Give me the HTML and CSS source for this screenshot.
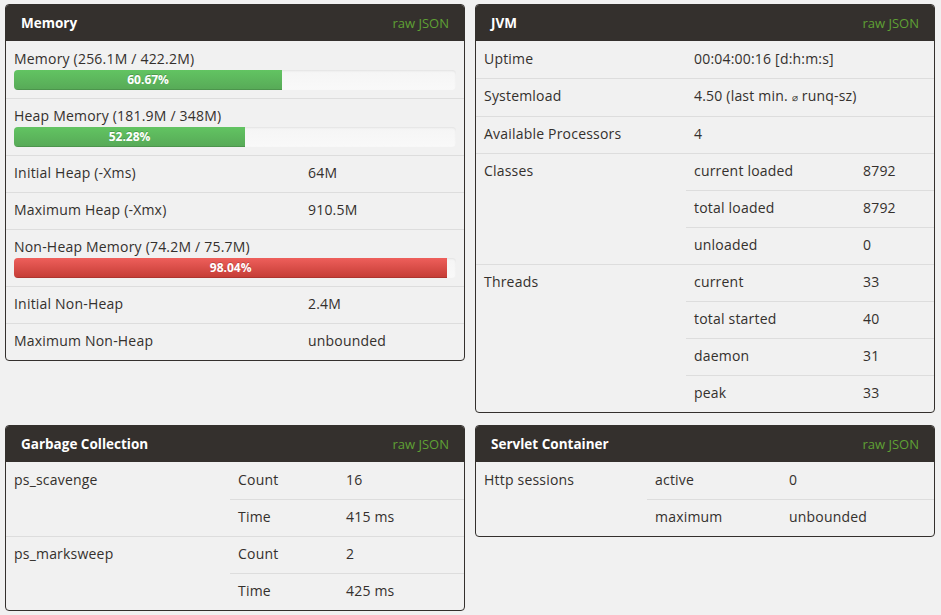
FILE: index.html
```html
<!DOCTYPE html>
<html>
<head>
<meta charset="utf-8">
<link rel="stylesheet" href="styles.css">
</head>
<body>
<div class="dashboard">
  <section class="panel">
    <header class="panel-head"><h2>Memory</h2><a class="raw" href="#">raw JSON</a></header>
    <table class="data">
      <colgroup><col class="w294"><col></colgroup>
      <tbody>
        <tr><td colspan="2">Memory (256.1M / 422.2M)<div class="progress"><div class="bar ok" style="width:60.67%">60.67%</div></div></td></tr>
        <tr><td colspan="2">Heap Memory (181.9M / 348M)<div class="progress"><div class="bar ok" style="width:52.28%">52.28%</div></div></td></tr>
        <tr><td>Initial Heap (-Xms)</td><td>64M</td></tr>
        <tr><td>Maximum Heap (-Xmx)</td><td>910.5M</td></tr>
        <tr><td colspan="2">Non-Heap Memory (74.2M / 75.7M)<div class="progress"><div class="bar danger" style="width:98.04%">98.04%</div></div></td></tr>
        <tr><td>Initial Non-Heap</td><td>2.4M</td></tr>
        <tr><td>Maximum Non-Heap</td><td>unbounded</td></tr>
      </tbody>
    </table>
  </section>

  <section class="panel">
    <header class="panel-head"><h2>JVM</h2><a class="raw" href="#">raw JSON</a></header>
    <table class="data">
      <colgroup><col class="w210"><col class="w169"><col></colgroup>
      <tbody>
        <tr><td>Uptime</td><td colspan="2">00:04:00:16 [d:h:m:s]</td></tr>
        <tr><td>Systemload</td><td colspan="2">4.50 (last min. <span class="avg">⌀</span> runq-sz)</td></tr>
        <tr><td>Available Processors</td><td colspan="2">4</td></tr>
        <tr><td rowspan="3">Classes</td><td>current loaded</td><td>8792</td></tr>
        <tr><td>total loaded</td><td>8792</td></tr>
        <tr><td>unloaded</td><td>0</td></tr>
        <tr><td rowspan="4">Threads</td><td>current</td><td>33</td></tr>
        <tr><td>total started</td><td>40</td></tr>
        <tr><td>daemon</td><td>31</td></tr>
        <tr><td>peak</td><td>33</td></tr>
      </tbody>
    </table>
  </section>

  <section class="panel">
    <header class="panel-head"><h2>Garbage Collection</h2><a class="raw" href="#">raw JSON</a></header>
    <table class="data">
      <colgroup><col class="w224"><col class="w108"><col></colgroup>
      <tbody>
        <tr><td rowspan="2">ps_scavenge</td><td>Count</td><td>16</td></tr>
        <tr><td>Time</td><td>415 ms</td></tr>
        <tr><td rowspan="2">ps_marksweep</td><td>Count</td><td>2</td></tr>
        <tr><td>Time</td><td>425 ms</td></tr>
      </tbody>
    </table>
  </section>

  <section class="panel">
    <header class="panel-head"><h2>Servlet Container</h2><a class="raw" href="#">raw JSON</a></header>
    <table class="data">
      <colgroup><col class="w171"><col class="w134"><col></colgroup>
      <tbody>
        <tr><td rowspan="2">Http sessions</td><td>active</td><td>0</td></tr>
        <tr><td>maximum</td><td>unbounded</td></tr>
      </tbody>
    </table>
  </section>
</div>
</body>
</html>
```
FILE: styles.css
```css
html, body {
  margin: 0;
  background: #f1f1f1;
}
body {
  font-family: "Open Sans", "Liberation Sans", sans-serif;
  font-size: 14px;
  letter-spacing: 0.2px;
  color: #34302d;
}
.dashboard {
  display: grid;
  grid-template-columns: 460px 460px;
  column-gap: 10px;
  row-gap: 12px;
  padding: 4px 6px 0 5px;
  align-items: start;
}
.panel {
  border: 1px solid #34302d;
  border-radius: 4px;
  overflow: hidden;
  background: #f1f1f1;
}
.panel-head {
  height: 36px;
  background: #34302d;
  display: flex;
  align-items: center;
  justify-content: space-between;
  padding: 0 15px;
}
.panel-head h2 {
  margin: 0;
  font-size: 13.5px;
  font-weight: 700;
  letter-spacing: 0;
  color: #fff;
}
.raw {
  color: #5fa134;
  font-size: 13px;
  letter-spacing: 0;
  text-decoration: none;
}
.data {
  width: 100%;
  border-collapse: collapse;
  table-layout: fixed;
}
.data td {
  padding: 7px 8px 9px;
  line-height: 20px;
  border-top: 1px solid #dddddd;
  vertical-align: top;
  text-align: left;
}
.data tr:first-child td {
  border-top-color: transparent;
}
.w294 { width: 294px; }
.w210 { width: 210px; }
.w169 { width: 169px; }
.w224 { width: 224px; }
.w108 { width: 108px; }
.w171 { width: 171px; }
.w134 { width: 134px; }
.avg {
  font-size: 10px;
}
.progress {
  height: 20px;
  margin: 1px 0 -1px;
  border-radius: 4px;
  background: linear-gradient(#f5f5f5, #f9f9f9);
  box-shadow: inset 0 1px 2px rgba(0, 0, 0, 0.08);
  overflow: hidden;
}
.bar {
  height: 20px;
  line-height: 20px;
  color: #fff;
  font-size: 12px;
  font-weight: 700;
  letter-spacing: 0;
  text-align: center;
  text-shadow: 0 -1px 0 rgba(0, 0, 0, 0.2);
  box-shadow: inset 0 -1px 0 rgba(0, 0, 0, 0.12);
}
.bar.ok {
  background: linear-gradient(#62c462, #57a957);
}
.bar.danger {
  background: linear-gradient(#ee5f5b, #c43c35);
}
```
